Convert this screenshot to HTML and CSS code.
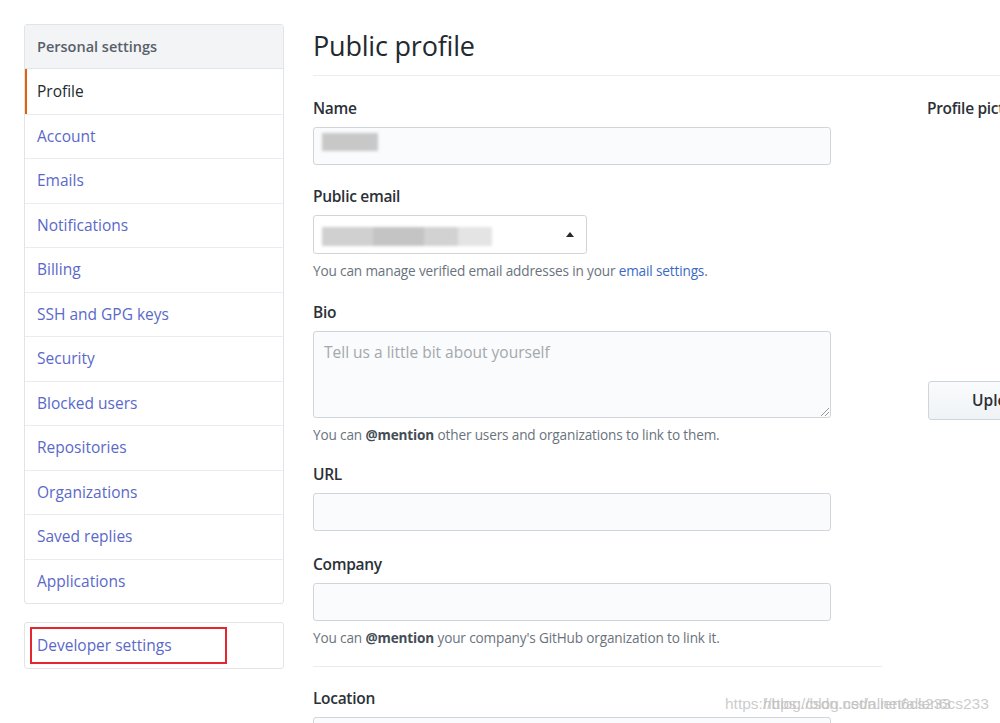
FILE: index.html
```html
<!DOCTYPE html>
<html>
<head>
<meta charset="utf-8">
<link rel="stylesheet" href="styles.css">
</head>
<body>
<div class="page">
  <aside class="sidebar">
    <nav class="menu">
      <div class="menu-head">Personal settings</div>
      <a class="menu-item selected">Profile</a>
      <a class="menu-item">Account</a>
      <a class="menu-item">Emails</a>
      <a class="menu-item">Notifications</a>
      <a class="menu-item">Billing</a>
      <a class="menu-item">SSH and GPG keys</a>
      <a class="menu-item">Security</a>
      <a class="menu-item">Blocked users</a>
      <a class="menu-item">Repositories</a>
      <a class="menu-item">Organizations</a>
      <a class="menu-item">Saved replies</a>
      <a class="menu-item">Applications</a>
    </nav>
    <nav class="menu dev">
      <a class="menu-item">Developer settings</a>
      <span class="highlight"></span>
    </nav>
  </aside>

  <main class="main">
    <h1 class="title">Public profile</h1>
    <div class="columns">
      <div class="form">
        <div class="group">
          <div class="label">Name</div>
          <div class="input name-input"><span class="blur blur-name"></span></div>
        </div>
        <div class="group">
          <div class="label">Public email</div>
          <div class="select"><span class="blur blur-email"></span><span class="caret"></span></div>
          <p class="note">You can manage verified email addresses in your <a class="link">email settings</a>.</p>
        </div>
        <div class="group bio">
          <div class="label">Bio</div>
          <div class="textarea"><span class="placeholder">Tell us a little bit about yourself</span><span class="grip"></span></div>
          <p class="note">You can <b>@mention</b> other users and organizations to link to them.</p>
        </div>
        <div class="group url">
          <div class="label">URL</div>
          <div class="input"></div>
        </div>
        <div class="group">
          <div class="label">Company</div>
          <div class="input"></div>
          <p class="note">You can <b>@mention</b> your company's GitHub organization to link it.</p>
        </div>
        <hr class="divider">
        <div class="group">
          <div class="label">Location</div>
          <div class="input"></div>
        </div>
      </div>
      <div class="avatar-col">
        <div class="label">Profile picture</div>
        <div class="avatar-space"></div>
        <div class="btn">Upload new picture</div>
      </div>
    </div>
  </main>
</div>
<div class="watermark"><span class="wm1">https://blog.csdn.net/allen6cs233</span><span class="wm2">https://blog.csdn.net/allen6cs233</span></div>
</body>
</html>
```

FILE: styles.css
```css
* { box-sizing: border-box; }
html, body { margin: 0; padding: 0; overflow: hidden; background: #fff; }
body {
  font-family: "Open Sans", "Noto Sans", sans-serif;
  color: #24292e;
  width: 1000px;
  height: 723px;
}
.page {
  display: flex;
  padding: 24px 0 0 24px;
  width: 1200px;
}
.sidebar { width: 260px; flex: none; }
.menu {
  border: 1px solid #e1e4e8;
  border-radius: 3px;
  background: #fff;
  position: relative;
}
.menu-head {
  height: 44px;
  line-height: 43px;
  padding-left: 12px;
  font-size: 14.5px;
  font-weight: 600;
  color: #586069;
  background: #f3f4f6;
  border-bottom: 1px solid #e1e4e8;
}
.menu-item {
  display: block;
  height: 44.5px;
  line-height: 42px;
  padding-left: 12px;
  font-size: 15.5px;
  color: #5a69c9;
  border-top: 1px solid #eaecef;
}
.menu-head + .menu-item { border-top: none; }
.menu-item.selected {
  color: #24292e;
  border-left: 2px solid #e36209;
  padding-left: 10px;
  line-height: 44px;
}
.menu.dev { margin-top: 18px; }
.menu.dev .menu-item { border-top: none; line-height: 44px; }
.highlight {
  position: absolute;
  left: 5px;
  top: 4px;
  width: 197px;
  height: 37px;
  border: 2px solid #e5262e;
}
.main { margin-left: 29px; flex: 1; }
.title {
  margin: 0;
  font-size: 27px;
  font-weight: 400;
  line-height: 44px;
  height: 52px;
  border-bottom: 1px solid #eaecef;
  letter-spacing: -0.2px;
  color: #24292e;
}
.columns { display: flex; padding-top: 22px; }
.form { width: 569px; flex: none; }
.group { margin-bottom: 21px; }
.group.bio { margin-bottom: 19px; }
.group.url { margin-bottom: 23px; }
.label {
  font-size: 15.5px;
  font-weight: 600;
  line-height: 20px;
  margin-bottom: 9px;
  letter-spacing: -0.3px;
  color: #2b3137;
}
.input, .select, .textarea {
  width: 518px;
  height: 38px;
  background: #fafbfc;
  border: 1px solid #d1d5da;
  border-radius: 3px;
  position: relative;
}
.select { width: 274px; height: 39px; background: #fff; }
.textarea { height: 87px; }
.blur { position: absolute; background: #c8c8c8; filter: blur(1.5px); }
.blur-name { left: 8px; top: 5px; width: 56px; height: 18px; }
.blur-email {
  left: 8px; top: 11px; width: 170px; height: 19px;
  background: linear-gradient(90deg, #d0d0d0 0 30%, #c4c4c4 30% 60%, #d2d2d2 60% 80%, #e4e4e4 80%);
}
.caret {
  position: absolute;
  right: 12px;
  top: 16px;
  width: 0; height: 0;
  border-left: 4px solid transparent;
  border-right: 4px solid transparent;
  border-bottom: 5px solid #24292e;
}
.placeholder {
  position: absolute;
  left: 10px;
  top: 9px;
  font-size: 15.5px;
  color: #a3a8ad;
}
.grip {
  position: absolute;
  right: 1px;
  bottom: 1px;
  width: 8px;
  height: 8px;
  background: linear-gradient(135deg, transparent 45%, #999 45% 52%, transparent 52% 70%, #999 70% 77%, transparent 77%);
}
.note {
  margin: 7px 0 0;
  font-size: 13.6px;
  line-height: 20px;
  color: #6a737d;
  letter-spacing: -0.15px;
}
.note b { color: #444d56; font-weight: 700; }
.link { color: #3b6ac4; }
.divider {
  border: 0;
  border-top: 1px solid #eaecef;
  margin: -3px 0 21px;
}
.avatar-col { margin-left: 46px; width: 300px; flex: none; }
.avatar-col .label { margin-left: -1px; }
.avatar-space { height: 254px; }
.btn {
  display: inline-block;
  height: 39px;
  line-height: 37px;
  padding: 0 16px 0 43px;
  font-size: 15.5px;
  font-weight: 600;
  color: #2b3137;
  border: 1px solid #d1d5da;
  border-radius: 3px;
  background: linear-gradient(#fafbfc, #eff3f6);
}
.watermark {
  position: absolute;
  left: 725px;
  top: 695px;
  font-family: "Liberation Sans", sans-serif;
  font-size: 15.5px;
  color: rgba(190, 190, 190, 0.8);
  white-space: nowrap;
}
.wm1, .wm2 { position: absolute; top: 0; }
.wm1 { left: 0; }
.wm2 { left: 38px; }
```
